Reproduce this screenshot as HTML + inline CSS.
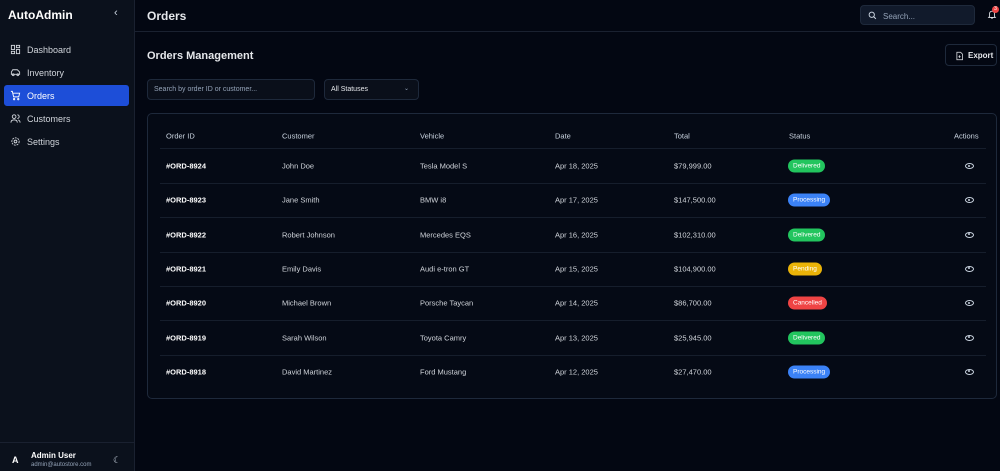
<!DOCTYPE html>
<html><head><style>
*{box-sizing:border-box;margin:0;padding:0}
body{width:1000px;height:471px;overflow:hidden;background:#030712;font-family:"Liberation Sans",sans-serif;color:#e5e7eb;position:relative}
.sb{position:absolute;left:0;top:0;width:135px;height:471px;background:#0b111c;border-right:1px solid #1a2130}
.logo{position:absolute;left:8px;top:8px;font-weight:bold;font-size:12px;color:#fff}
.chev{position:absolute;left:114px;top:7px;font-size:11px;color:#cbd5e1}
.nav{position:absolute;left:4px;width:125px;height:21px;font-size:9px;color:#d1d5db;display:flex;align-items:center;padding-left:6px;border-radius:3px}
.nav svg{width:11px;height:11px;margin-right:6px;fill:none;stroke:#d1d5db;stroke-width:2}
.nav.act{background:#1d4ed8;color:#fff}
.foot{position:absolute;left:0;top:442px;width:134px;border-top:1px solid #1a2130;height:29px}
.top{position:absolute;left:135px;top:0;right:0;height:32px;border-bottom:1px solid #1a2130}
.h1{position:absolute;left:147px;top:9px;font-size:12px;font-weight:bold;color:#e5e7eb}
.search{position:absolute;left:860px;top:5px;width:115px;height:20px;background:#111a2b;border:1px solid #1e293b;border-radius:4px;font-size:8px;color:#94a3b8;padding:6px 0 0 22px}
.h2{position:absolute;left:147px;top:50px;font-size:11px;font-weight:bold;color:#e5e7eb}
.btn{position:absolute;left:945px;top:44px;width:52px;height:22px;border:1px solid #1e293b;border-radius:4px;font-size:8px;font-weight:bold;color:#e5e7eb;padding:6px 0 0 22px}
.inp{position:absolute;top:79px;height:21px;border:1px solid #1e293b;border-radius:4px;background:#0a0f1a;font-size:7px;padding:6px 0 0 6px}
.card{position:absolute;left:147px;top:113px;width:850px;height:286px;border:1px solid #1e293b;border-radius:5px;background:#050a15}
.c{position:absolute;font-size:7.5px;color:#d1d5db;transform:translateY(-50%)}
.th{color:#cbd5e1}
.line{position:absolute;left:160px;width:826px;height:1px;background:#161e2c}
.b{position:absolute;transform:translateY(-50%);font-size:6.5px;color:#fff;border-radius:7px;padding:3px 5px}
.eye{position:absolute;left:965px;width:9px;height:6px;border:1.3px solid #cbd5e1;border-radius:50%;transform:translateY(-50%)}
.eye:after{content:"";position:absolute;left:2px;top:0.5px;width:2px;height:2px;border-radius:50%;background:#cbd5e1}
</style></head><body>
<div class="sb">
<div class="logo">AutoAdmin</div><div class="chev">‹</div>
<div class="nav" style="top:39px"><svg viewBox="0 0 24 24"><rect x="3" y="3" width="7" height="9"/><rect x="14" y="3" width="7" height="5"/><rect x="14" y="12" width="7" height="9"/><rect x="3" y="16" width="7" height="5"/></svg>Dashboard</div>
<div class="nav" style="top:62px"><svg viewBox="0 0 24 24"><path d="M3 16V11l3-5h10l5 5v5z"/><circle cx="7" cy="17" r="2"/><circle cx="17" cy="17" r="2"/></svg>Inventory</div>
<div class="nav act" style="top:85px"><svg viewBox="0 0 24 24" style="stroke:#fff"><path d="M2 3h3l3 12h11l2-8H6"/><circle cx="9" cy="20" r="1.5"/><circle cx="18" cy="20" r="1.5"/></svg>Orders</div>
<div class="nav" style="top:108px"><svg viewBox="0 0 24 24"><circle cx="9" cy="8" r="4"/><path d="M2 21c0-4 3-6 7-6s7 2 7 6M16 4a4 4 0 010 8M22 21c0-3-2-5-4-6"/></svg>Customers</div>
<div class="nav" style="top:131px"><svg viewBox="0 0 24 24"><circle cx="12" cy="12" r="3"/><circle cx="12" cy="12" r="8" stroke-dasharray="4 2"/></svg>Settings</div>
<div class="foot">
<div style="position:absolute;left:12px;top:12px;font-size:9px;font-weight:bold;color:#fff">A</div>
<div style="position:absolute;left:31px;top:8px;font-size:8px;font-weight:bold;color:#fff">Admin User</div>
<div style="position:absolute;left:31px;top:19px;font-size:6px;color:#94a3b8">admin@autostore.com</div>
<div style="position:absolute;left:113px;top:12px;font-size:9px;color:#cbd5e1">☾</div>
</div></div>
<div class="top"></div>
<div class="h1">Orders</div>
<div class="search"><svg style="position:absolute;left:7px;top:5px" width="9" height="9" viewBox="0 0 24 24" fill="none" stroke="#cbd5e1" stroke-width="2.5"><circle cx="10" cy="10" r="7"/><path d="M15 15l6 6"/></svg>Search...</div>
<svg style="position:absolute;left:987px;top:9px" width="10" height="11" viewBox="0 0 24 24" fill="none" stroke="#e5e7eb" stroke-width="2"><path d="M6 17V10a6 6 0 0112 0v7l2 2H4zM10 21h4"/></svg>
<div style="position:absolute;left:992px;top:6px;width:7px;height:7px;border-radius:50%;background:#ef4444;font-size:5px;color:#fff;text-align:center;line-height:7px">3</div>
<div class="h2">Orders Management</div>
<div class="btn"><svg style="position:absolute;left:9px;top:6px" width="9" height="10" viewBox="0 0 24 24" fill="none" stroke="#e5e7eb" stroke-width="2"><path d="M5 2h10l5 5v15H5zM12 10v7M9 14h6"/></svg>Export</div>
<div class="inp" style="left:147px;width:168px;color:#94a3b8">Search by order ID or customer...</div>
<div class="inp" style="left:324px;width:95px;color:#e5e7eb">All Statuses<span style="position:absolute;right:9px;top:5px;color:#94a3b8;font-size:6px">⌄</span></div>
<div class="card"></div>
<div class="c th" style="left:166px;top:136px">Order ID</div>
<div class="c th" style="left:282px;top:136px">Customer</div>
<div class="c th" style="left:420px;top:136px">Vehicle</div>
<div class="c th" style="left:555px;top:136px">Date</div>
<div class="c th" style="left:674px;top:136px">Total</div>
<div class="c th" style="left:789px;top:136px">Status</div>
<div class="c th" style="left:954px;top:136px">Actions</div>
<div class="line" style="top:148px"></div>
<div id="rows"></div>
<script>
var d=[["8924","John Doe","Tesla Model S","Apr 18, 2025","$79,999.00","Delivered"],
["8923","Jane Smith","BMW i8","Apr 17, 2025","$147,500.00","Processing"],
["8922","Robert Johnson","Mercedes EQS","Apr 16, 2025","$102,310.00","Delivered"],
["8921","Emily Davis","Audi e-tron GT","Apr 15, 2025","$104,900.00","Pending"],
["8920","Michael Brown","Porsche Taycan","Apr 14, 2025","$86,700.00","Cancelled"],
["8919","Sarah Wilson","Toyota Camry","Apr 13, 2025","$25,945.00","Delivered"],
["8918","David Martinez","Ford Mustang","Apr 12, 2025","$27,470.00","Processing"]];
var col={Delivered:"#22c55e",Processing:"#3b82f6",Pending:"#eab308",Cancelled:"#ef4444"};
var h="";d.forEach(function(r,i){var y=166+i*34.3;
h+='<div class="c" style="left:166px;top:'+y+'px;font-weight:bold;color:#fff">#ORD-'+r[0]+'</div>';
[282,420,555,674].forEach(function(x,j){h+='<div class="c" style="left:'+x+'px;top:'+y+'px">'+r[j+1]+'</div>'});
h+='<div class="b" style="left:788px;top:'+y+'px;background:'+col[r[5]]+'">'+r[5]+'</div>';
h+='<div class="eye" style="top:'+y+'px"></div>';
if(i<6)h+='<div class="line" style="top:'+(y+17)+'px"></div>';});
document.getElementById("rows").innerHTML=h;
</script>
</body></html>
